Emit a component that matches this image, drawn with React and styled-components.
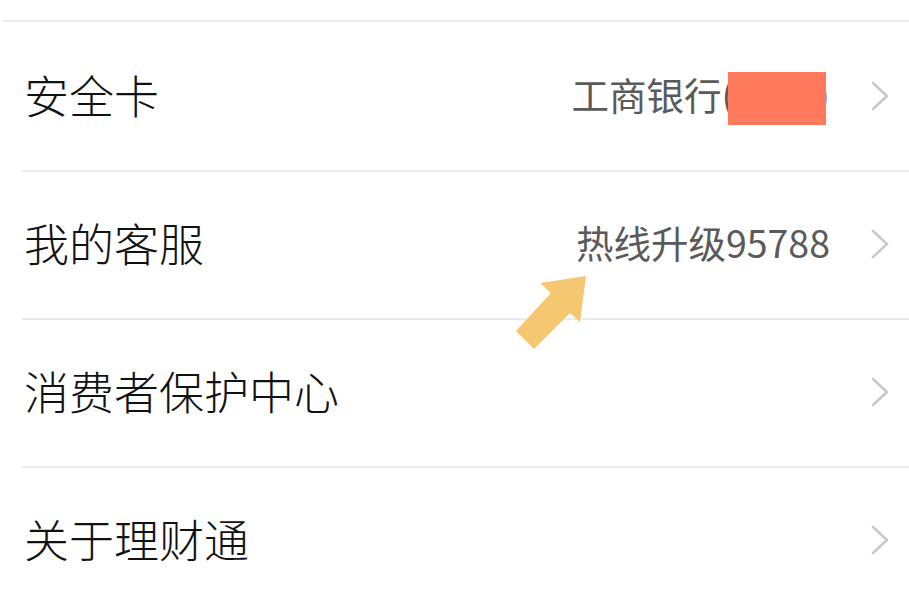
import React from 'react'
import styled, { createGlobalStyle } from 'styled-components'

const GlobalStyle = createGlobalStyle`
  html, body {
    margin: 0;
    padding: 0;
    background: #fff;
    overflow: hidden;
  }
  body {
    font-family: "Noto Sans CJK SC", "Noto Sans", sans-serif;
  }
`

const items = [
  { title: '安全卡', value: 'bank' },
  { title: '我的客服', value: '热线升级95788' },
  { title: '消费者保护中心' },
  { title: '关于理财通' },
]

const Chevron = () => (
  <ChevronIcon width="20" height="30" viewBox="0 0 20 30">
    <polyline points="3,2 17,15 3,28" fill="none" stroke="#c9c9c9" strokeWidth="2.6" strokeLinecap="round" strokeLinejoin="round" />
  </ChevronIcon>
)

const Arrow = () => (
  <ArrowMark width="82" height="84" viewBox="0 0 82 84">
    <polygon points="76,6 30,13 41,23 6,61 24,79 60,43 70,52" fill="#f5c770" />
  </ArrowMark>
)

const App = () => {
  return (
    <Page>
      <GlobalStyle />
      <TopLine />
      <List>
        {items.map((item, i) => (
          <Row key={item.title} first={i === 0}>
            <Title>{item.title}</Title>
            <Right>
              {item.value === 'bank' && (
                <Value>
                  <Redacted>
                    工商银行(8888)
                    <Mask />
                  </Redacted>
                </Value>
              )}
              {item.value && item.value !== 'bank' && <Value>{item.value}</Value>}
              <Chevron />
            </Right>
          </Row>
        ))}
      </List>
      <Arrow />
    </Page>
  )
}

export default App

const Page = styled.div`
  position: relative;
  width: 909px;
  height: 606px;
  padding-top: 20px;
  box-sizing: border-box;
  overflow: hidden;
`

const TopLine = styled.div`
  height: 2px;
  margin-left: 3px;
  background: #ececec;
`

const List = styled.div`
  padding-left: 22px;
`

const Row = styled.div`
  display: flex;
  align-items: center;
  justify-content: space-between;
  height: 148px;
  box-sizing: border-box;
  border-top: ${p => (p.first ? 'none' : '2px solid #ebebeb')};
  padding: 0 19px 0 2px;
  padding-bottom: ${p => (p.first ? '4px' : '6px')};
`

const Title = styled.div`
  font-size: 45px;
  font-weight: 300;
  color: #111;
  line-height: 1;
`

const Right = styled.div`
  display: flex;
  align-items: center;
  gap: 40px;
`

const Value = styled.div`
  font-size: 37.5px;
  color: #5a5a5a;
  line-height: 1;
`

const Redacted = styled.span`
  position: relative;
`

const Mask = styled.span`
  position: absolute;
  right: 4px;
  top: 6px;
  width: 98px;
  height: 53px;
  background: #ff7a5c;
`

const ChevronIcon = styled.svg`
  display: block;
  margin-top: 4px;
`

const ArrowMark = styled.svg`
  position: absolute;
  left: 510px;
  top: 270px;
`
